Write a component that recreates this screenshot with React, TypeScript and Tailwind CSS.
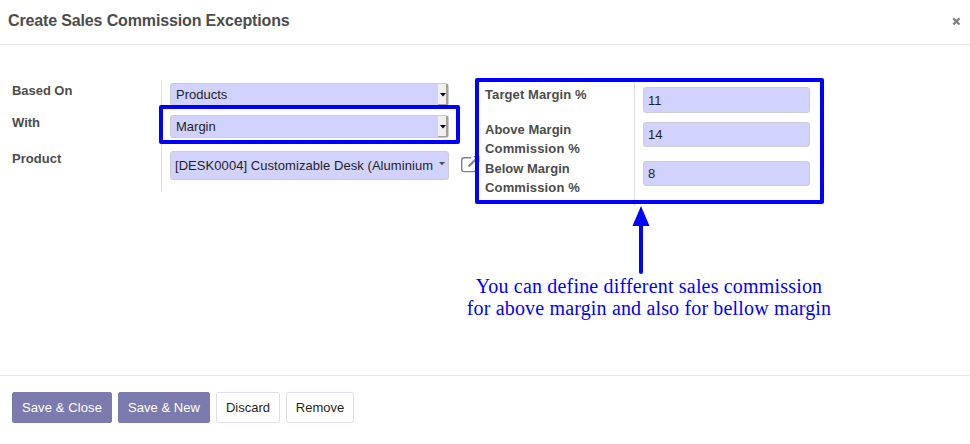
import React from 'react';

function SelectField({ value }: { value: string }) {
  return (
    <div className="flex h-[23px] w-[279px] items-center justify-between rounded-[3px] border border-[#cccccc] bg-[#d2d2ff] pl-[5px] text-[#1f1f1f]">
      <span>{value}</span>
      <span className="flex h-[21px] w-[10px] items-center justify-center border-r-2 border-b border-[#a3a09c] bg-[#f1f0ee]">
        <svg width="6" height="4" viewBox="0 0 6 4" className="mt-px ml-[2px] shrink-0">
          <path d="M0 0h6L3 3.5z" fill="#000" />
        </svg>
      </span>
    </div>
  );
}

function NumberField({ value, className }: { value: string; className: string }) {
  return (
    <div className={`flex w-[167px] items-center rounded-[3px] border border-[#cccccc] bg-[#d2d2ff] pl-[4px] text-[#1f1f1f] ${className}`}>
      {value}
    </div>
  );
}

function ExternalLinkIcon() {
  return (
    <svg width="20" height="19" viewBox="0 0 20 19" fill="none" className="mt-[4px] ml-[11px] shrink-0">
      <path d="M11 2.7H4Q1.7 2.7 1.7 5v9.3Q1.7 16.6 4 16.6h9.5q2.3 0 2.3-2.3V10" stroke="#7c7bad" strokeWidth="1.4" />
      <path d="M8.5 11.5L17.5 2.5" stroke="#7c7bad" strokeWidth="2.2" />
      <path d="M13 1h6.5v6.5z" fill="#7c7bad" />
    </svg>
  );
}

function Button({ children, className }: { children: React.ReactNode; className: string }) {
  return (
    <button className={`flex h-[31px] items-center justify-center rounded-[2px] border whitespace-nowrap ${className}`}>
      {children}
    </button>
  );
}

export default function App() {
  return (
    <div className="relative flex h-[444px] w-[970px] flex-col overflow-hidden bg-white font-['Liberation_Sans',Arial,sans-serif] text-[13px] leading-[19px] text-[#4c4c4c]">
      <header className="flex h-[45px] items-center justify-between border-b border-[#e5e5e5] pr-[9px] pb-[4px] pl-2">
        <h1 className="text-[16px] font-bold tracking-[-0.14px]">Create Sales Commission Exceptions</h1>
        <button aria-label="Close" className="flex">
          <svg width="9" height="9" viewBox="0 0 9 9" className="mt-[2px]">
            <path d="M1.3 1.3l6.2 6.2M7.5 1.3L1.3 7.5" stroke="#828282" strokeWidth="2.4" />
          </svg>
        </button>
      </header>

      <main className="flex h-[330px] items-start pt-9 pl-3">
        <section className="flex h-[110px] w-[473px]">
          <div className="flex w-[149px] flex-col font-bold">
            <span className="h-8 tracking-[-0.05px]">Based On</span>
            <span className="h-9">With</span>
            <span className="tracking-[0.03px]">Product</span>
          </div>
          <div className="flex flex-col border-l border-[#dddddd] pt-[2px] pl-2">
            <SelectField value="Products" />
            <div className="mt-[9px]">
              <SelectField value="Margin" />
            </div>
            <div className="mt-[13px] flex">
              <div className="flex h-[29px] w-[279px] shrink-0 items-center rounded-[3px] border border-[#cccccc] bg-[#d2d2ff] pl-[4px] text-[#1f1f1f]">
                <span className="w-[260px] whitespace-nowrap tracking-[0.06px]">[DESK0004] Customizable Desk (Aluminium</span>
                <svg width="6" height="4" viewBox="0 0 6 4" className="mb-[3px] ml-[4px]">
                  <path d="M0 0h6L3 3.2z" fill="#4c4c4c" />
                </svg>
              </div>
              <ExternalLinkIcon />
            </div>
          </div>
        </section>

        <section className="flex h-[125px]">
          <div className="flex w-[149px] flex-col pt-1 font-bold">
            <span className="h-[35px] tracking-[0.1px]">Target Margin %</span>
            <span className="h-[39px]">
              <span className="tracking-[0.02px]">Above Margin</span>
              <br />
              <span className="tracking-[0.15px]">Commission %</span>
            </span>
            <span>
              <span className="tracking-[0.02px]">Below Margin</span>
              <br />
              <span className="tracking-[0.15px]">Commission %</span>
            </span>
          </div>
          <div className="border-l border-[#dddddd] pt-[6px] pl-2">
            <NumberField value="11" className="h-[26px]" />
            <NumberField value="14" className="mt-[9px] h-[25px]" />
            <NumberField value="8" className="mt-[14px] h-[25px]" />
          </div>
        </section>
      </main>

      <footer className="flex h-[69px] gap-[6px] border-t border-[#e5e5e5] pt-4 pl-3">
        <Button className="w-[100px] border-[#7c7bad] bg-[#7c7bad] tracking-[0.1px] text-white">Save &amp; Close</Button>
        <Button className="w-[92px] border-[#7c7bad] bg-[#7c7bad] tracking-[0.05px] text-white">Save &amp; New</Button>
        <Button className="w-[64px] border-[#dfe0e8] text-[#1f1f1f]">Discard</Button>
        <Button className="w-[68px] border-[#dfe0e8] text-[#1f1f1f]">Remove</Button>
      </footer>

      {/* Annotations over the form */}
      <div className="absolute top-[105px] left-[159px] h-[39px] w-[301px] rounded-[2px] border-4 border-[#0000ff]" />
      <div className="absolute top-[78px] left-[475px] h-[126px] w-[349px] rounded-[2px] border-4 border-[#0000ff]" />
      <svg className="absolute top-[206px] left-[632px]" width="18" height="68" viewBox="0 0 18 68">
        <path d="M9 0l8.5 20H.5z" fill="#0000ff" />
        <path d="M9 18v48" stroke="#0000ff" strokeWidth="4" strokeLinecap="round" />
      </svg>
      <p className="absolute top-[275px] left-[449px] w-[400px] text-center font-['Liberation_Serif','Times_New_Roman',serif] text-[20px] leading-[22px] text-[#0000ff]">
        <span className="tracking-[0.18px]">You can define different sales commission</span>
        <br />
        <span className="tracking-[0.16px]">for above margin and also for bellow margin</span>
      </p>
    </div>
  );
}
